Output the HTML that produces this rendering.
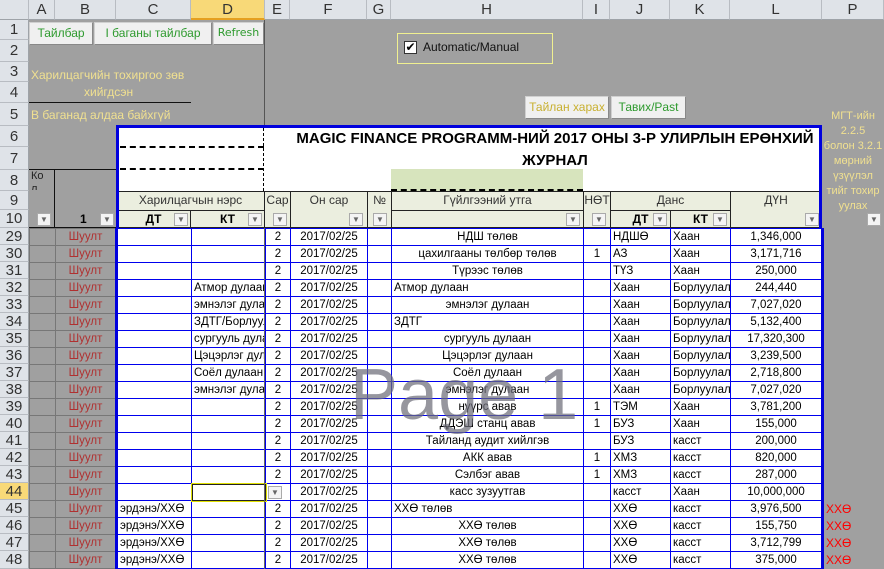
<!DOCTYPE html>
<html><head><meta charset="utf-8"><style>
*{margin:0;padding:0;box-sizing:border-box}
body{width:884px;height:569px;overflow:hidden;background:#a0a0a0;position:relative;font-family:"Liberation Sans","DejaVu Sans",sans-serif;font-size:11px;color:#000}
.a{position:absolute}
.ch{position:absolute;top:0;height:20px;background:#dfe3e8;border-right:1px solid #b8bcc2;border-bottom:1px solid #9ea3a8;text-align:center;line-height:20px;font-size:15px;color:#333}
.rh{position:absolute;left:0;width:29px;background:#dfe3e8;border-bottom:1px solid #b8bcc2;border-right:1px solid #9ea3a8;text-align:center;font-size:15px;color:#333}
.btn{position:absolute;background:#f0f0f0;border:1px solid #d0d0d0;border-right-color:#888;border-bottom-color:#888;text-align:center;line-height:20px;font-size:12px;color:#2e9a2e}
table{border-collapse:collapse;table-layout:fixed;position:absolute}
td{height:17px;border:1px solid #0000ee;white-space:nowrap;overflow:hidden;font-size:11.5px;padding:0 2px;background:#fff;line-height:15px}
td.g{background:#a0a0a0;border-color:#777}
td.s{color:#b03030;text-align:center}
td.c{text-align:center}
td.p{background:#a0a0a0;color:#f00;border:none;font-size:12px}
.f{position:absolute;width:14px;height:13px;background:#f4f4f4;border:1px solid #aaa;font-size:8px;color:#666;text-align:center;line-height:12px}
.hd{position:absolute;background:#ebeedf;border:1px solid #222;text-align:center;font-size:12px;color:#333;line-height:17px}
</style></head><body>
<div class="ch" style="left:0;width:29px;background:#dfe3e8"></div>
<div class="ch" style="left:29px;width:26px">A</div>
<div class="ch" style="left:55px;width:61px">B</div>
<div class="ch" style="left:116px;width:75px">C</div>
<div class="ch" style="left:191px;width:74px;background:#f8d978;border-bottom:2px solid #e5a020">D</div>
<div class="ch" style="left:265px;width:25px">E</div>
<div class="ch" style="left:290px;width:77px">F</div>
<div class="ch" style="left:367px;width:24px">G</div>
<div class="ch" style="left:391px;width:192px">H</div>
<div class="ch" style="left:583px;width:27px">I</div>
<div class="ch" style="left:610px;width:60px">J</div>
<div class="ch" style="left:670px;width:60px">K</div>
<div class="ch" style="left:730px;width:92px">L</div>
<div class="ch" style="left:822px;width:62px">P</div>
<div class="rh" style="top:20px;height:20px;line-height:20px">1</div>
<div class="rh" style="top:40px;height:22px;line-height:22px">2</div>
<div class="rh" style="top:62px;height:20px;line-height:20px">3</div>
<div class="rh" style="top:82px;height:21px;line-height:21px">4</div>
<div class="rh" style="top:103px;height:23px;line-height:23px">5</div>
<div class="rh" style="top:126px;height:21px;line-height:21px">6</div>
<div class="rh" style="top:147px;height:23px;line-height:23px">7</div>
<div class="rh" style="top:170px;height:21px;line-height:21px">8</div>
<div class="rh" style="top:191px;height:19px;line-height:19px">9</div>
<div class="rh" style="top:210px;height:18px;line-height:18px">10</div>
<div class="rh" style="top:228px;height:17px;line-height:17px">29</div>
<div class="rh" style="top:245px;height:17px;line-height:17px">30</div>
<div class="rh" style="top:262px;height:17px;line-height:17px">31</div>
<div class="rh" style="top:279px;height:17px;line-height:17px">32</div>
<div class="rh" style="top:296px;height:17px;line-height:17px">33</div>
<div class="rh" style="top:313px;height:17px;line-height:17px">34</div>
<div class="rh" style="top:330px;height:17px;line-height:17px">35</div>
<div class="rh" style="top:347px;height:17px;line-height:17px">36</div>
<div class="rh" style="top:364px;height:17px;line-height:17px">37</div>
<div class="rh" style="top:381px;height:17px;line-height:17px">38</div>
<div class="rh" style="top:398px;height:17px;line-height:17px">39</div>
<div class="rh" style="top:415px;height:17px;line-height:17px">40</div>
<div class="rh" style="top:432px;height:17px;line-height:17px">41</div>
<div class="rh" style="top:449px;height:17px;line-height:17px">42</div>
<div class="rh" style="top:466px;height:17px;line-height:17px">43</div>
<div class="rh" style="top:483px;height:17px;line-height:17px;background:#f8d978">44</div>
<div class="rh" style="top:500px;height:17px;line-height:17px">45</div>
<div class="rh" style="top:517px;height:17px;line-height:17px">46</div>
<div class="rh" style="top:534px;height:17px;line-height:17px">47</div>
<div class="rh" style="top:551px;height:18px;line-height:17px">48</div>

<div class="a" style="left:264px;top:20px;width:1px;height:106px;background:#555"></div>
<div class="btn" style="left:29px;top:22px;width:64px;height:23px">Тайлбар</div>
<div class="btn" style="left:94px;top:22px;width:118px;height:23px">І баганы тайлбар</div>
<div class="btn" style="left:213px;top:22px;width:51px;height:23px;font-family:'DejaVu Sans',sans-serif;font-size:11px">Refresh</div>
<div class="a" style="left:31px;top:68px;color:#f0e090;font-size:12px">Харилцагчийн тохиргоо зөв</div>
<div class="a" style="left:84px;top:85px;color:#f0e090;font-size:12px">хийгдсэн</div>
<div class="a" style="left:29px;top:102px;width:162px;height:1px;background:#111"></div>
<div class="a" style="left:31px;top:108px;color:#f0e090;font-size:12px">В баганад алдаа байхгүй</div>
<div class="a" style="left:397px;top:33px;width:156px;height:31px;border:1px solid #f0f090"></div>
<div class="a" style="left:404px;top:41px;width:13px;height:13px;background:#fff;border:1px solid #333;font-size:12px;line-height:11px;text-align:center;font-weight:bold">✔</div>
<div class="a" style="left:423px;top:40px;font-size:12px;color:#111">Automatic/Manual</div>
<div class="btn" style="left:525px;top:96px;width:84px;height:23px;color:#c8b030">Тайлан харах</div>
<div class="btn" style="left:611px;top:96px;width:75px;height:23px;color:#2e9a2e">Тавих/Past</div>
<div class="a" style="left:822px;top:109px;width:62px;text-align:center;color:#f0e090;font-size:11px;line-height:15px">МГТ-ийн<br>2.2.5<br>болон 3.2.1<br>мөрний<br>үзүүлэл<br>тийг тохир<br>уулах</div>

<div class="a" style="left:116px;top:125px;width:706px;height:66px;background:#fff;border-top:3px solid #0000dd;border-left:3px solid #0000dd;border-right:3px solid #0000dd"></div>
<div class="a" style="left:120px;top:146px;width:144px;border-top:2px dashed #000"></div>
<div class="a" style="left:120px;top:168px;width:144px;border-top:2px dashed #000"></div>
<div class="a" style="left:263px;top:128px;height:63px;border-left:1px dashed #000"></div>
<div class="a" style="left:391px;top:169px;width:192px;height:22px;background:#d7e4bd;border-bottom:2px dashed #000"></div>
<div class="a" style="left:268px;top:128px;width:574px;text-align:center;font-weight:bold;font-size:15px;line-height:22px">MAGIC FINANCE PROGRAMM-НИЙ 2017 ОНЫ 3-Р УЛИРЛЫН ЕРӨНХИЙ<br>ЖУРНАЛ</div>
<div class="a" style="left:29px;top:169px;width:87px;height:1px;background:#111"></div>
<div class="a" style="left:54px;top:169px;width:1px;height:59px;background:#111"></div>
<div class="a" style="left:31px;top:170px;font-size:11px;line-height:13px;color:#222;width:20px;height:20px;overflow:hidden">Ко<br>л</div>
<div class="a" style="left:29px;top:227px;width:87px;height:1px;background:#111"></div>

<div class="hd" style="left:116px;top:191px;width:149px;height:20px">Харилцагчын нэрс</div>
<div class="hd" style="left:116px;top:210px;width:75px;height:18px;font-weight:bold;color:#000">ДТ</div>
<div class="hd" style="left:190px;top:210px;width:75px;height:18px;font-weight:bold;color:#000">КТ</div>
<div class="hd" style="left:264px;top:191px;width:27px;height:37px">Сар</div>
<div class="hd" style="left:290px;top:191px;width:78px;height:37px">Он сар</div>
<div class="hd" style="left:367px;top:191px;width:25px;height:37px">№</div>
<div class="hd" style="left:391px;top:191px;width:193px;height:20px">Гүйлгээний утга</div>
<div class="hd" style="left:391px;top:210px;width:193px;height:18px"></div>
<div class="hd" style="left:583px;top:191px;width:28px;height:37px">НӨТ</div>
<div class="hd" style="left:610px;top:191px;width:121px;height:20px">Данс</div>
<div class="hd" style="left:610px;top:210px;width:61px;height:18px;font-weight:bold;color:#000">ДТ</div>
<div class="hd" style="left:670px;top:210px;width:61px;height:18px;font-weight:bold;color:#000">КТ</div>
<div class="hd" style="left:730px;top:191px;width:92px;height:37px">ДҮН</div>
<div class="a" style="left:116px;top:191px;width:3px;height:37px;background:#0000dd"></div>
<div class="a" style="left:819px;top:191px;width:3px;height:37px;background:#0000dd"></div>
<div class="a" style="left:80px;top:212px;font-weight:bold;font-size:12px">1</div>
<div class="f" style="left:37px;top:213px">▼</div>
<div class="f" style="left:100px;top:213px">▼</div>
<div class="f" style="left:174px;top:213px">▼</div>
<div class="f" style="left:248px;top:213px">▼</div>
<div class="f" style="left:273px;top:213px">▼</div>
<div class="f" style="left:349px;top:213px">▼</div>
<div class="f" style="left:373px;top:213px">▼</div>
<div class="f" style="left:566px;top:213px">▼</div>
<div class="f" style="left:592px;top:213px">▼</div>
<div class="f" style="left:653px;top:213px">▼</div>
<div class="f" style="left:713px;top:213px">▼</div>
<div class="f" style="left:805px;top:213px">▼</div>
<div class="f" style="left:867px;top:213px">▼</div>

<table style="left:29px;top:228px;width:855px">
<colgroup><col style="width:26px"><col style="width:61px"><col style="width:75px"><col style="width:74px"><col style="width:25px"><col style="width:77px"><col style="width:24px"><col style="width:192px"><col style="width:27px"><col style="width:60px"><col style="width:60px"><col style="width:92px"><col style="width:62px"></colgroup>
<tr><td class="g"></td><td class="g s">Шуулт</td><td style="border-left:3px solid #0000dd"></td><td></td><td class="c">2</td><td class="c">2017/02/25</td><td></td><td class="c">НДШ төлөв</td><td></td><td>НДШӨ</td><td>Хаан</td><td class="c">1,346,000</td><td class="p" style="border-left:3px solid #0000dd"></td></tr>
<tr><td class="g"></td><td class="g s">Шуулт</td><td style="border-left:3px solid #0000dd"></td><td></td><td class="c">2</td><td class="c">2017/02/25</td><td></td><td class="c">цахилгааны төлбөр төлөв</td><td class="c">1</td><td>АЗ</td><td>Хаан</td><td class="c">3,171,716</td><td class="p" style="border-left:3px solid #0000dd"></td></tr>
<tr><td class="g"></td><td class="g s">Шуулт</td><td style="border-left:3px solid #0000dd"></td><td></td><td class="c">2</td><td class="c">2017/02/25</td><td></td><td class="c">Түрээс төлөв</td><td></td><td>ТҮЗ</td><td>Хаан</td><td class="c">250,000</td><td class="p" style="border-left:3px solid #0000dd"></td></tr>
<tr><td class="g"></td><td class="g s">Шуулт</td><td style="border-left:3px solid #0000dd"></td><td>Атмор дулаан</td><td class="c">2</td><td class="c">2017/02/25</td><td></td><td>Атмор дулаан</td><td></td><td>Хаан</td><td>Борлуулалт</td><td class="c">244,440</td><td class="p" style="border-left:3px solid #0000dd"></td></tr>
<tr><td class="g"></td><td class="g s">Шуулт</td><td style="border-left:3px solid #0000dd"></td><td>эмнэлэг дулаан</td><td class="c">2</td><td class="c">2017/02/25</td><td></td><td class="c">эмнэлэг дулаан</td><td></td><td>Хаан</td><td>Борлуулалт</td><td class="c">7,027,020</td><td class="p" style="border-left:3px solid #0000dd"></td></tr>
<tr><td class="g"></td><td class="g s">Шуулт</td><td style="border-left:3px solid #0000dd"></td><td>ЗДТГ/Борлуулалт</td><td class="c">2</td><td class="c">2017/02/25</td><td></td><td>ЗДТГ</td><td></td><td>Хаан</td><td>Борлуулалт</td><td class="c">5,132,400</td><td class="p" style="border-left:3px solid #0000dd"></td></tr>
<tr><td class="g"></td><td class="g s">Шуулт</td><td style="border-left:3px solid #0000dd"></td><td>сургууль дулаан</td><td class="c">2</td><td class="c">2017/02/25</td><td></td><td class="c">сургууль дулаан</td><td></td><td>Хаан</td><td>Борлуулалт</td><td class="c">17,320,300</td><td class="p" style="border-left:3px solid #0000dd"></td></tr>
<tr><td class="g"></td><td class="g s">Шуулт</td><td style="border-left:3px solid #0000dd"></td><td>Цэцэрлэг дулаан</td><td class="c">2</td><td class="c">2017/02/25</td><td></td><td class="c">Цэцэрлэг дулаан</td><td></td><td>Хаан</td><td>Борлуулалт</td><td class="c">3,239,500</td><td class="p" style="border-left:3px solid #0000dd"></td></tr>
<tr><td class="g"></td><td class="g s">Шуулт</td><td style="border-left:3px solid #0000dd"></td><td>Соёл дулаан</td><td class="c">2</td><td class="c">2017/02/25</td><td></td><td class="c">Соёл дулаан</td><td></td><td>Хаан</td><td>Борлуулалт</td><td class="c">2,718,800</td><td class="p" style="border-left:3px solid #0000dd"></td></tr>
<tr><td class="g"></td><td class="g s">Шуулт</td><td style="border-left:3px solid #0000dd"></td><td>эмнэлэг дулаан</td><td class="c">2</td><td class="c">2017/02/25</td><td></td><td class="c">эмнэлэг дулаан</td><td></td><td>Хаан</td><td>Борлуулалт</td><td class="c">7,027,020</td><td class="p" style="border-left:3px solid #0000dd"></td></tr>
<tr><td class="g"></td><td class="g s">Шуулт</td><td style="border-left:3px solid #0000dd"></td><td></td><td class="c">2</td><td class="c">2017/02/25</td><td></td><td class="c">нүүрс авав</td><td class="c">1</td><td>ТЭМ</td><td>Хаан</td><td class="c">3,781,200</td><td class="p" style="border-left:3px solid #0000dd"></td></tr>
<tr><td class="g"></td><td class="g s">Шуулт</td><td style="border-left:3px solid #0000dd"></td><td></td><td class="c">2</td><td class="c">2017/02/25</td><td></td><td class="c">ДДЭШ станц авав</td><td class="c">1</td><td>БУЗ</td><td>Хаан</td><td class="c">155,000</td><td class="p" style="border-left:3px solid #0000dd"></td></tr>
<tr><td class="g"></td><td class="g s">Шуулт</td><td style="border-left:3px solid #0000dd"></td><td></td><td class="c">2</td><td class="c">2017/02/25</td><td></td><td class="c">Тайланд аудит хийлгэв</td><td></td><td>БУЗ</td><td>касст</td><td class="c">200,000</td><td class="p" style="border-left:3px solid #0000dd"></td></tr>
<tr><td class="g"></td><td class="g s">Шуулт</td><td style="border-left:3px solid #0000dd"></td><td></td><td class="c">2</td><td class="c">2017/02/25</td><td></td><td class="c">АКК авав</td><td class="c">1</td><td>ХМЗ</td><td>касст</td><td class="c">820,000</td><td class="p" style="border-left:3px solid #0000dd"></td></tr>
<tr><td class="g"></td><td class="g s">Шуулт</td><td style="border-left:3px solid #0000dd"></td><td></td><td class="c">2</td><td class="c">2017/02/25</td><td></td><td class="c">Сэлбэг авав</td><td class="c">1</td><td>ХМЗ</td><td>касст</td><td class="c">287,000</td><td class="p" style="border-left:3px solid #0000dd"></td></tr>
<tr><td class="g"></td><td class="g s">Шуулт</td><td style="border-left:3px solid #0000dd"></td><td style="border:2px solid #222;outline:1px solid #e0e000"></td><td class="c"></td><td class="c">2017/02/25</td><td></td><td class="c">касс зузуутгав</td><td></td><td>касст</td><td>Хаан</td><td class="c">10,000,000</td><td class="p" style="border-left:3px solid #0000dd"></td></tr>
<tr><td class="g"></td><td class="g s">Шуулт</td><td style="border-left:3px solid #0000dd">эрдэнэ/ХХӨ</td><td></td><td class="c">2</td><td class="c">2017/02/25</td><td></td><td>ХХӨ төлөв</td><td></td><td>ХХӨ</td><td>касст</td><td class="c">3,976,500</td><td class="p" style="border-left:3px solid #0000dd">ХХӨ</td></tr>
<tr><td class="g"></td><td class="g s">Шуулт</td><td style="border-left:3px solid #0000dd">эрдэнэ/ХХӨ</td><td></td><td class="c">2</td><td class="c">2017/02/25</td><td></td><td class="c">ХХӨ төлөв</td><td></td><td>ХХӨ</td><td>касст</td><td class="c">155,750</td><td class="p" style="border-left:3px solid #0000dd">ХХӨ</td></tr>
<tr><td class="g"></td><td class="g s">Шуулт</td><td style="border-left:3px solid #0000dd">эрдэнэ/ХХӨ</td><td></td><td class="c">2</td><td class="c">2017/02/25</td><td></td><td class="c">ХХӨ төлөв</td><td></td><td>ХХӨ</td><td>касст</td><td class="c">3,712,799</td><td class="p" style="border-left:3px solid #0000dd">ХХӨ</td></tr>
<tr><td class="g"></td><td class="g s">Шуулт</td><td style="border-left:3px solid #0000dd">эрдэнэ/ХХӨ</td><td></td><td class="c">2</td><td class="c">2017/02/25</td><td></td><td class="c">ХХӨ төлөв</td><td></td><td>ХХӨ</td><td>касст</td><td class="c">375,000</td><td class="p" style="border-left:3px solid #0000dd">ХХӨ</td></tr>
</table>
<div class="a" style="left:264px;top:228px;width:1px;height:341px;background:#666"></div>
<div class="f" style="left:268px;top:486px">▼</div>
<div class="a" style="left:350px;top:359px;font-size:72px;color:rgba(110,110,120,0.72);line-height:72px">Page 1</div>
</body></html>
